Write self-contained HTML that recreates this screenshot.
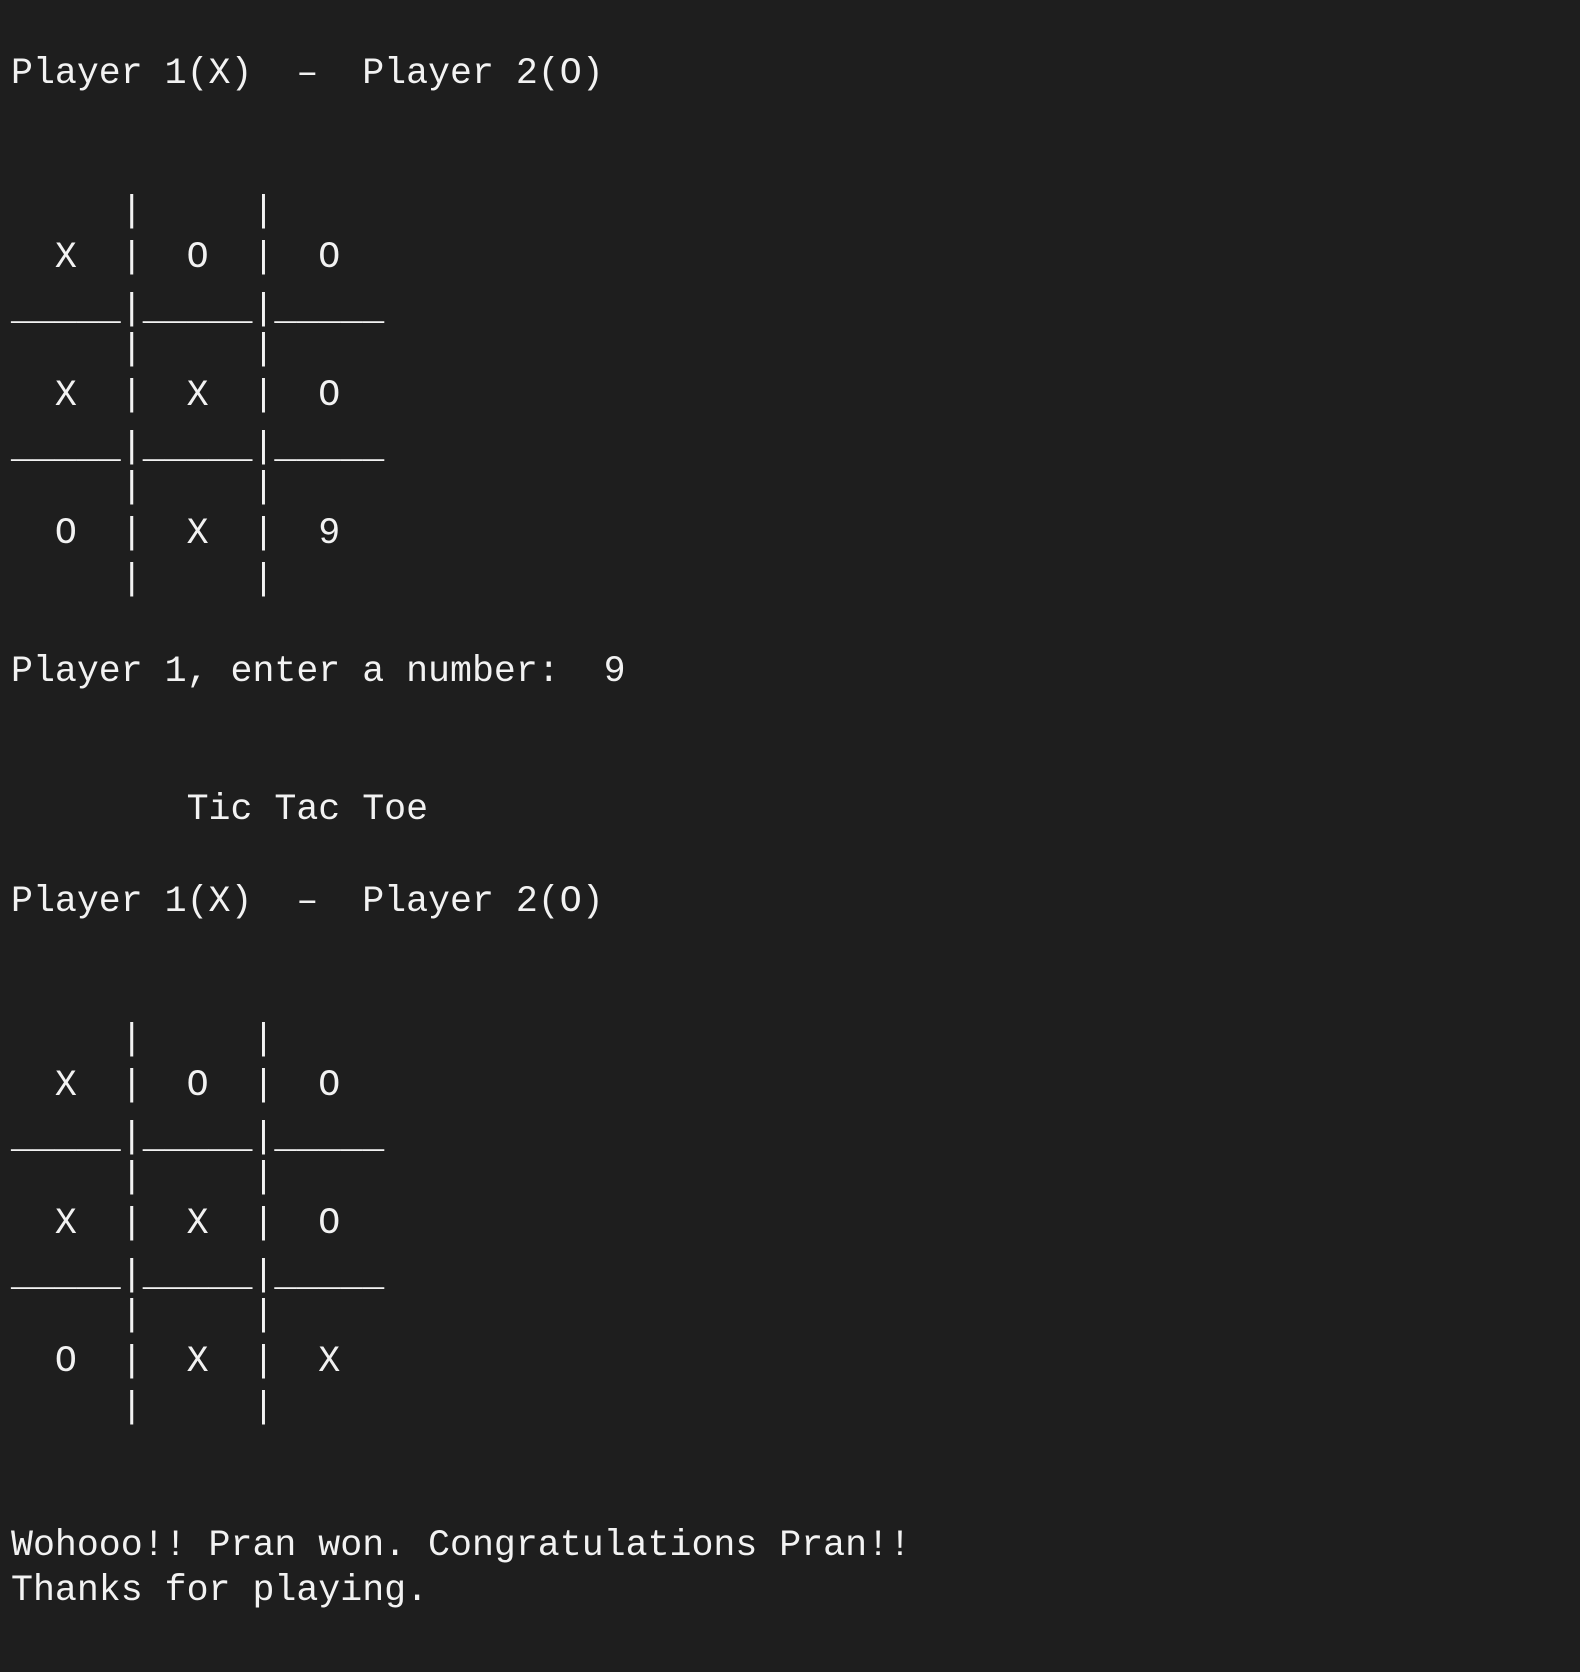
<!DOCTYPE html>
<html><head><meta charset="utf-8"><style>
html,body{margin:0;padding:0;background:#1e1e1e;width:1580px;height:1672px;overflow:hidden}
pre{margin:0;position:absolute;left:11px;top:51px;font-family:"Liberation Mono",monospace;font-size:36.6px;line-height:45.98px;color:#f2f2f2}
.u{position:relative;top:6px}
</style></head><body><pre>Player 1(X)  –  Player 2(O)


     |     |
  X  |  O  |  O
<span class="u">_____|_____|_____</span>
     |     |
  X  |  X  |  O
<span class="u">_____|_____|_____</span>
     |     |
  O  |  X  |  9
     |     |

Player 1, enter a number:  9


        Tic Tac Toe

Player 1(X)  –  Player 2(O)


     |     |
  X  |  O  |  O
<span class="u">_____|_____|_____</span>
     |     |
  X  |  X  |  O
<span class="u">_____|_____|_____</span>
     |     |
  O  |  X  |  X
     |     |


Wohooo!! Pran won. Congratulations Pran!!
Thanks for playing.</pre></body></html>
